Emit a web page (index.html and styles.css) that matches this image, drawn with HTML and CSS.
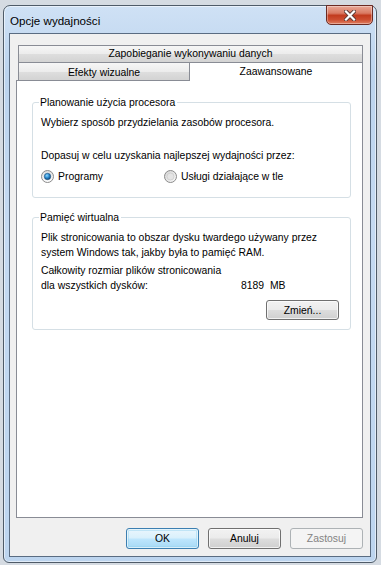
FILE: index.html
```html
<!DOCTYPE html>
<html lang="pl">
<head>
  <meta charset="UTF-8" />
  <meta name="viewport" content="width=device-width, initial-scale=1.0" />
  <title>Opcje wydajności</title>
  <link rel="stylesheet" href="styles.css">
</head>
<body>
  <div class="window">
    <div class="titlebar">
      <span class="title">Opcje wydajności</span>
      <button class="close-btn" aria-label="Zamknij">
        <svg width="12" height="11" viewBox="0 0 12 11">
          <path d="M2 1.5 L10 9.5 M10 1.5 L2 9.5" stroke="#5a3a36" stroke-width="4" stroke-linecap="square" />
          <path d="M2 1.5 L10 9.5 M10 1.5 L2 9.5" stroke="#ffffff" stroke-width="2.2" stroke-linecap="square" />
        </svg>
      </button>
    </div>

    <div class="client">
      <div class="tabs">
        <div class="tab-row">
          <div class="tab tab-wide">Zapobieganie wykonywaniu danych</div>
        </div>
        <div class="tab-row tab-row-front">
          <div class="tab tab-left">Efekty wizualne</div>
          <div class="tab tab-active">Zaawansowane</div>
        </div>
      </div>

      <div class="panel">
        <fieldset class="group">
          <legend>Planowanie użycia procesora</legend>
          <p class="line first">Wybierz sposób przydzielania zasobów procesora.</p>
          <p class="line spaced">Dopasuj w celu uzyskania najlepszej wydajności przez:</p>
          <div class="radios">
            <label class="radio radio-first">
              <svg class="radio-mark" width="13" height="13" viewBox="0 0 13 13">
                <defs>
                  <radialGradient id="dotOn" cx="40%" cy="35%" r="70%">
                    <stop offset="0" stop-color="#8fd8ff" />
                    <stop offset="0.5" stop-color="#2b8bd0" />
                    <stop offset="1" stop-color="#0c3c6a" />
                  </radialGradient>
                  <linearGradient id="ring" x1="0" y1="0" x2="0" y2="1">
                    <stop offset="0" stop-color="#dcdcdc" />
                    <stop offset="1" stop-color="#ffffff" />
                  </linearGradient>
                </defs>
                <circle cx="6.5" cy="6.5" r="6" fill="url(#ring)" stroke="#8b8b8b" />
                <circle cx="6.5" cy="6.5" r="3.2" fill="url(#dotOn)" stroke="#1b4f7d" stroke-width="0.6" />
              </svg>
              Programy
            </label>
            <label class="radio">
              <svg class="radio-mark" width="13" height="13" viewBox="0 0 13 13">
                <defs>
                  <linearGradient id="ringOff" x1="0" y1="0" x2="1" y2="1">
                    <stop offset="0" stop-color="#d2d2d2" />
                    <stop offset="1" stop-color="#fbfbfb" />
                  </linearGradient>
                </defs>
                <circle cx="6.5" cy="6.5" r="6" fill="url(#ringOff)" stroke="#8b8b8b" />
                <circle cx="6.5" cy="6.5" r="3.5" fill="#e4e4e4" stroke="#c4c4c4" stroke-width="0.6" />
              </svg>
              Usługi działające w tle
            </label>
          </div>
        </fieldset>

        <fieldset class="group group-second">
          <legend>Pamięć wirtualna</legend>
          <p class="line first">Plik stronicowania to obszar dysku twardego używany przez<br>system Windows tak, jakby była to pamięć RAM.</p>
          <div class="total">
            <span>Całkowity rozmiar plików stronicowania</span>
            <span></span>
            <span>dla wszystkich dysków:</span>
            <span class="size">8189  MB</span>
          </div>
          <div class="group-actions">
            <button class="btn btn-change">Zmień...</button>
          </div>
        </fieldset>
      </div>

      <div class="actions">
        <button class="btn btn-default">OK</button>
        <button class="btn">Anuluj</button>
        <button class="btn" disabled>Zastosuj</button>
      </div>
    </div>
  </div>
</body>
</html>
```

FILE: styles.css
```css
body {
  margin: 0;
  background-color: #d5dbe2;
  font-family: 'Liberation Sans', Arial, sans-serif;
  font-size: 10.4px;
  color: #000;
}

.window {
  margin: 5px 4px 0 3px;
  height: 558px;
  box-sizing: border-box;
  padding: 0 5px 5px 5px;
  border: 1px solid #4f5b68;
  border-radius: 7px 7px 6px 6px;
  background: linear-gradient(to bottom, #cfe1f5 0%, #bcd4ee 12%, #c5daf2 40%, #bdd5ef 100%);
  box-shadow: inset 0 0 0 1px rgba(255, 255, 255, 0.55);
  display: flex;
  flex-direction: column;
}

.titlebar {
  height: 27px;
  display: flex;
  justify-content: space-between;
  align-items: flex-start;
}

.title {
  padding-left: 1px;
  margin-top: 7px;
  font-size: 11.6px;
  line-height: 15px;
}

.close-btn {
  width: 47px;
  height: 20px;
  margin: -1px -2px 0 0;
  padding: 0;
  border: 1px solid #6b2a22;
  border-radius: 0 0 5px 5px;
  background: linear-gradient(to bottom, #e9a897 0%, #d97a63 40%, #c23b1f 52%, #cc4e31 76%, #e07f62 100%);
  box-shadow: inset 0 0 0 1px rgba(255, 255, 255, 0.35);
  display: flex;
  align-items: center;
  justify-content: center;
}

.client {
  flex: 1;
  display: flex;
  flex-direction: column;
  padding: 11px 7px 7px 6px;
  background-color: #f0f0f0;
  border: 1px solid #5a6c82;
}

.tabs {
  padding-left: 2px;
}

.tab-row {
  display: flex;
}

.tab-row-front {
  position: relative;
  z-index: 1;
  margin-bottom: -1px;
}

.tab {
  box-sizing: border-box;
  text-align: center;
  line-height: 15px;
  border: 1px solid #898c95;
  background: linear-gradient(to bottom, #f6f6f6 0%, #ececec 50%, #dedede 52%, #d3d3d3 100%);
}

.tab-wide {
  flex: 1;
  height: 17px;
  border-bottom: none;
}

.tab-left {
  width: 172px;
  height: 19px;
  padding-top: 2px;
}

.tab-active {
  flex: 1;
  height: 19px;
  padding-top: 1px;
  border-left: none;
  border-bottom: none;
  background: #ffffff;
}

.panel {
  flex: 1;
  background-color: #ffffff;
  border: 1px solid #898c95;
  padding: 14px 11px 0 15px;
}

.group {
  margin: 0;
  padding: 0 8px 13px 8px;
  border: 1px solid #d5dfe5;
  border-radius: 3px;
  box-shadow: inset 0 0 0 1px #ffffff;
}

.group legend {
  margin-left: -2px;
  padding: 0 2px 0 1px;
  line-height: 15px;
}

.group-second {
  margin-top: 12px;
  padding-bottom: 9px;
}

.line {
  margin: 0;
  line-height: 15px;
}

.line.first {
  margin-top: 5px;
}

.line.spaced {
  margin-top: 18px;
}

.radios {
  display: flex;
  margin-top: 6px;
  line-height: 15px;
}

.radio {
  display: flex;
  align-items: center;
  gap: 4px;
}

.radio-first {
  width: 123px;
}

.total {
  display: grid;
  grid-template-columns: 200px auto;
  margin-top: 3px;
  line-height: 15px;
}

.size {
  white-space: pre;
}

.group-actions {
  display: flex;
  justify-content: flex-end;
  margin-top: 7px;
  padding-right: 3px;
}

.btn {
  width: 73px;
  height: 21px;
  padding: 0;
  font-family: inherit;
  font-size: 10.4px;
  color: #000;
  border: 1px solid #707070;
  border-radius: 3px;
  background: linear-gradient(to bottom, #f2f2f2 0%, #ebebeb 48%, #dddddd 52%, #cfcfcf 100%);
  box-shadow: inset 0 0 0 1px rgba(255, 255, 255, 0.7);
}

.btn-change {
  height: 20px;
}

.btn-default {
  border-color: #3c7fb1;
  background: linear-gradient(to bottom, #eaf6fd 0%, #d9f0fc 48%, #bee6fd 52%, #a7d9f5 100%);
  box-shadow: inset 0 0 0 1px rgba(255, 255, 255, 0.6), inset 0 0 0 2px rgba(151, 211, 240, 0.5);
}

.btn:disabled {
  color: #838383;
  border-color: #adb2b5;
  background: #f4f4f4;
  box-shadow: none;
}

.actions {
  display: flex;
  justify-content: flex-end;
  gap: 9px;
  margin-top: 10px;
}
```
